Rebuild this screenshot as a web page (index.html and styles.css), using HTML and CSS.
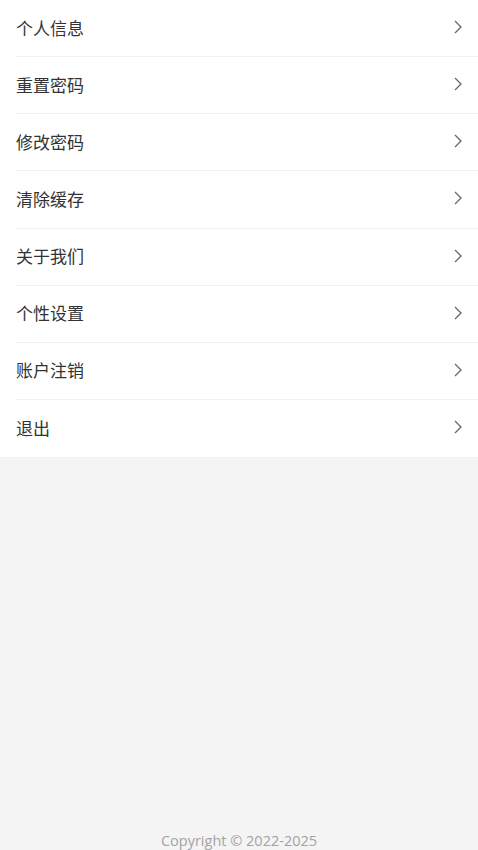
FILE: index.html
```html
<!DOCTYPE html>
<html lang="zh-CN">
<head>
<meta charset="utf-8">
<title>设置</title>
<link rel="stylesheet" href="styles.css">
</head>
<body>
<div class="page">
  <ul class="menu">
    <li class="item"><span class="label">个人信息</span><svg class="chev" viewBox="0 0 8 14"><path d="M1 1l6 6-6 6"/></svg></li>
    <li class="item"><span class="label">重置密码</span><svg class="chev" viewBox="0 0 8 14"><path d="M1 1l6 6-6 6"/></svg></li>
    <li class="item"><span class="label">修改密码</span><svg class="chev" viewBox="0 0 8 14"><path d="M1 1l6 6-6 6"/></svg></li>
    <li class="item"><span class="label">清除缓存</span><svg class="chev" viewBox="0 0 8 14"><path d="M1 1l6 6-6 6"/></svg></li>
    <li class="item"><span class="label">关于我们</span><svg class="chev" viewBox="0 0 8 14"><path d="M1 1l6 6-6 6"/></svg></li>
    <li class="item"><span class="label">个性设置</span><svg class="chev" viewBox="0 0 8 14"><path d="M1 1l6 6-6 6"/></svg></li>
    <li class="item"><span class="label">账户注销</span><svg class="chev" viewBox="0 0 8 14"><path d="M1 1l6 6-6 6"/></svg></li>
    <li class="item"><span class="label">退出</span><svg class="chev" viewBox="0 0 8 14"><path d="M1 1l6 6-6 6"/></svg></li>
  </ul>
  <footer class="copy">Copyright © 2022-2025</footer>
</div>
</body>
</html>
```
FILE: styles.css
```css
html, body {
  margin: 0;
  padding: 0;
  background: #f4f4f4;
}
.page {
  height: 850px;
  display: flex;
  flex-direction: column;
  font-family: "Noto Sans CJK SC", "Noto Sans", sans-serif;
}
.menu {
  list-style: none;
  margin: 0;
  padding: 0 0 0 16px;
  background: #fff;
}
.item {
  height: 57.125px;
  box-sizing: border-box;
  display: flex;
  align-items: center;
  justify-content: space-between;
  padding-right: 16px;
  padding-bottom: 2px;
  border-bottom: 1px solid #f1f1f1;
}
.item:last-child {
  border-bottom: none;
}
.label {
  font-size: 17px;
  color: #333;
  line-height: 1;
}
.chev {
  width: 8px;
  height: 14px;
  fill: none;
  stroke: #666;
  stroke-width: 1.3;
}
.copy {
  margin-top: auto;
  text-align: center;
  font-family: "Open Sans", "Noto Sans", sans-serif;
  font-size: 14.5px;
  color: #a3a3a3;
  line-height: 20px;
  padding-bottom: 0;
  margin-bottom: -1px;
}
```
